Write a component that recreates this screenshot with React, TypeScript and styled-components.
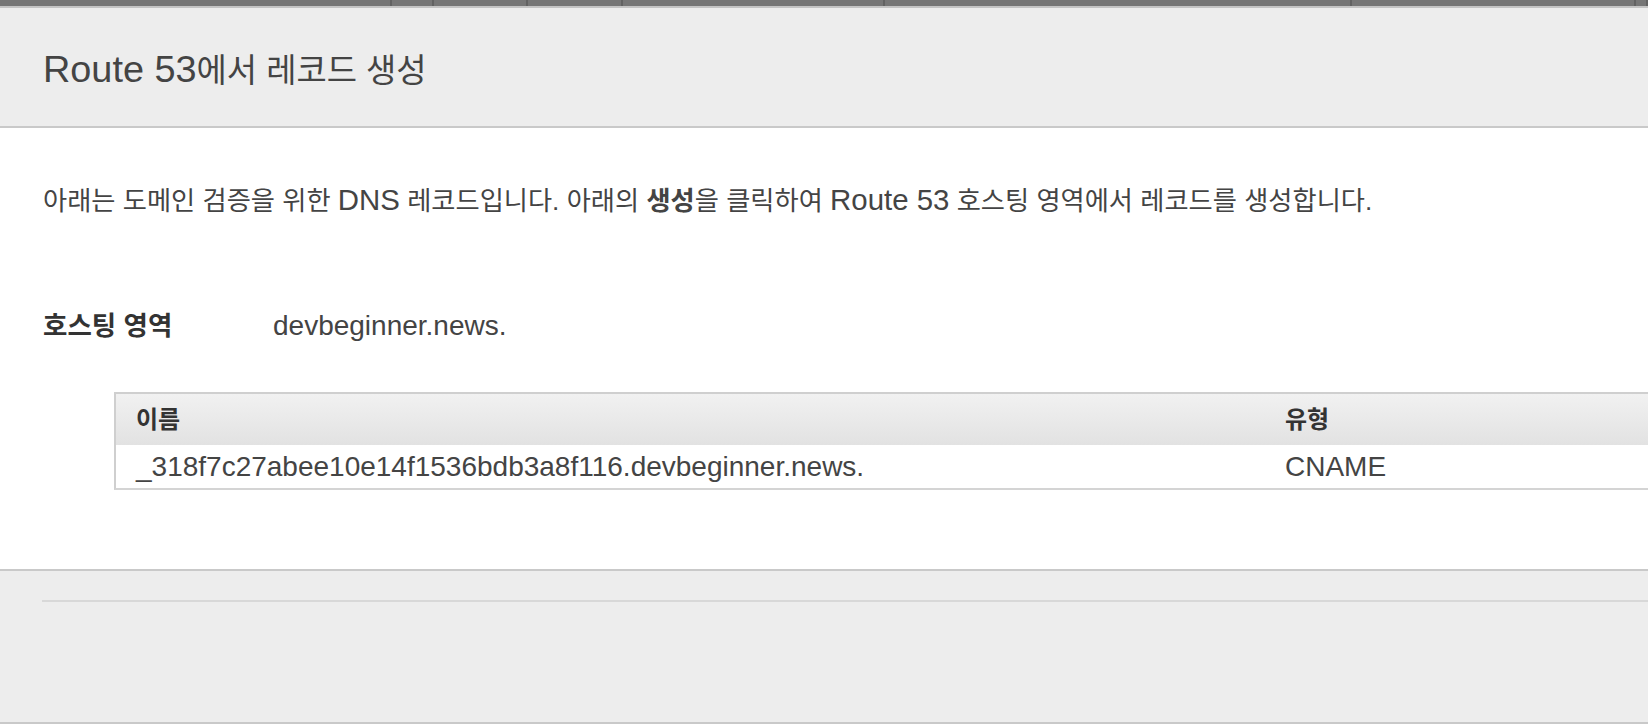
import styled, { createGlobalStyle } from 'styled-components'

const Global = createGlobalStyle`
  html, body {
    margin: 0;
    padding: 0;
    background: #ffffff;
  }
  body {
    font-family: "Liberation Sans", "Noto Sans CJK KR", Arial, sans-serif;
    color: #444444;
    overflow: hidden;
  }
`

const Page = styled.div`
  width: 1648px;
  height: 724px;
  display: flex;
  flex-direction: column;
`

const Backdrop = styled.div`
  height: 6px;
  display: flex;
  background: #767676;
  border-bottom: 2px solid #c4c4c4;
`

const BackdropCell = styled.div<{ w: number }>`
  width: ${p => p.w}px;
  flex: none;
  border-right: 2px solid #626262;
  box-sizing: border-box;
`

const Header = styled.div`
  height: 118px;
  display: flex;
  align-items: center;
  padding-left: 43px;
  background: #ededed;
  border-bottom: 2px solid #c9c9c9;
`

const Title = styled.h1`
  margin: 6px 0 0;
  font-weight: normal;
  font-size: 32.9px;
  line-height: 40px;
  color: #444444;
`

// latin runs are drawn a bit larger than the korean ones, as in the shot
const L = styled.span<{ k?: number }>`
  font-size: ${p => p.k ?? 1.12}em;
`

const Body = styled.div`
  padding: 56px 0 79px 43px;
  font-size: 26.25px;
  line-height: 32px;
`

const Intro = styled.p`
  margin: 0;
  white-space: nowrap;
`

const HostRow = styled.div`
  margin-top: 93px;
  display: flex;
  align-items: center;
  height: 32px;
`

const HostLabel = styled.div`
  width: 230px;
  font-weight: bold;
  font-size: 26.5px;
  color: #333333;
`

const HostValue = styled.div`
  font-size: 28px;
`

const Table = styled.div`
  margin: 50px 0 0 71px;
  border-top: 2px solid #cfcfcf;
  border-left: 2px solid #cfcfcf;
  border-bottom: 2px solid #d4d4d4;
`

const Row = styled.div<{ head?: boolean }>`
  display: grid;
  grid-template-columns: 1149px 1fr;
  align-items: center;
  height: ${p => (p.head ? 51 : 43)}px;
  background: ${p => (p.head ? 'linear-gradient(#f1f1f1, #e2e2e2)' : '#ffffff')};
  font-weight: ${p => (p.head ? 'bold' : 'normal')};
  font-size: ${p => (p.head ? '24px' : '28px')};
  color: ${p => (p.head ? '#333333' : '#444444')};
`

const Cell = styled.div`
  padding-left: 20px;
  white-space: nowrap;
`

const Footer = styled.div`
  flex: 1;
  background: #ededed;
  border-top: 2px solid #c9c9c9;
  border-bottom: 2px solid #c9c9c9;
  padding: 29px 0 0 42px;
`

const FooterLine = styled.div`
  height: 2px;
  background: #d8d8d8;
`

const cells = [392, 42, 94, 95, 262, 467, 284, 12]

function App() {
  return (
    <Page>
      <Global />
      <Backdrop>
        {cells.map((w, i) => (
          <BackdropCell key={i} w={w} />
        ))}
      </Backdrop>
      <Header>
        <Title>
          <L k={1.15}>Route 53</L>에서 레코드 생성
        </Title>
      </Header>
      <Body>
        <Intro>
          아래는 도메인 검증을 위한 <L>DNS</L> 레코드입니다. 아래의 <b>생성</b>을 클릭하여 <L>Route 53</L> 호스팅 영역에서 레코드를 생성합니다.
        </Intro>
        <HostRow>
          <HostLabel>호스팅 영역</HostLabel>
          <HostValue>devbeginner.news.</HostValue>
        </HostRow>
        <Table>
          <Row head>
            <Cell>이름</Cell>
            <Cell>유형</Cell>
          </Row>
          <Row>
            <Cell>_318f7c27abee10e14f1536bdb3a8f116.devbeginner.news.</Cell>
            <Cell>CNAME</Cell>
          </Row>
        </Table>
      </Body>
      <Footer>
        <FooterLine />
      </Footer>
    </Page>
  )
}

export default App
